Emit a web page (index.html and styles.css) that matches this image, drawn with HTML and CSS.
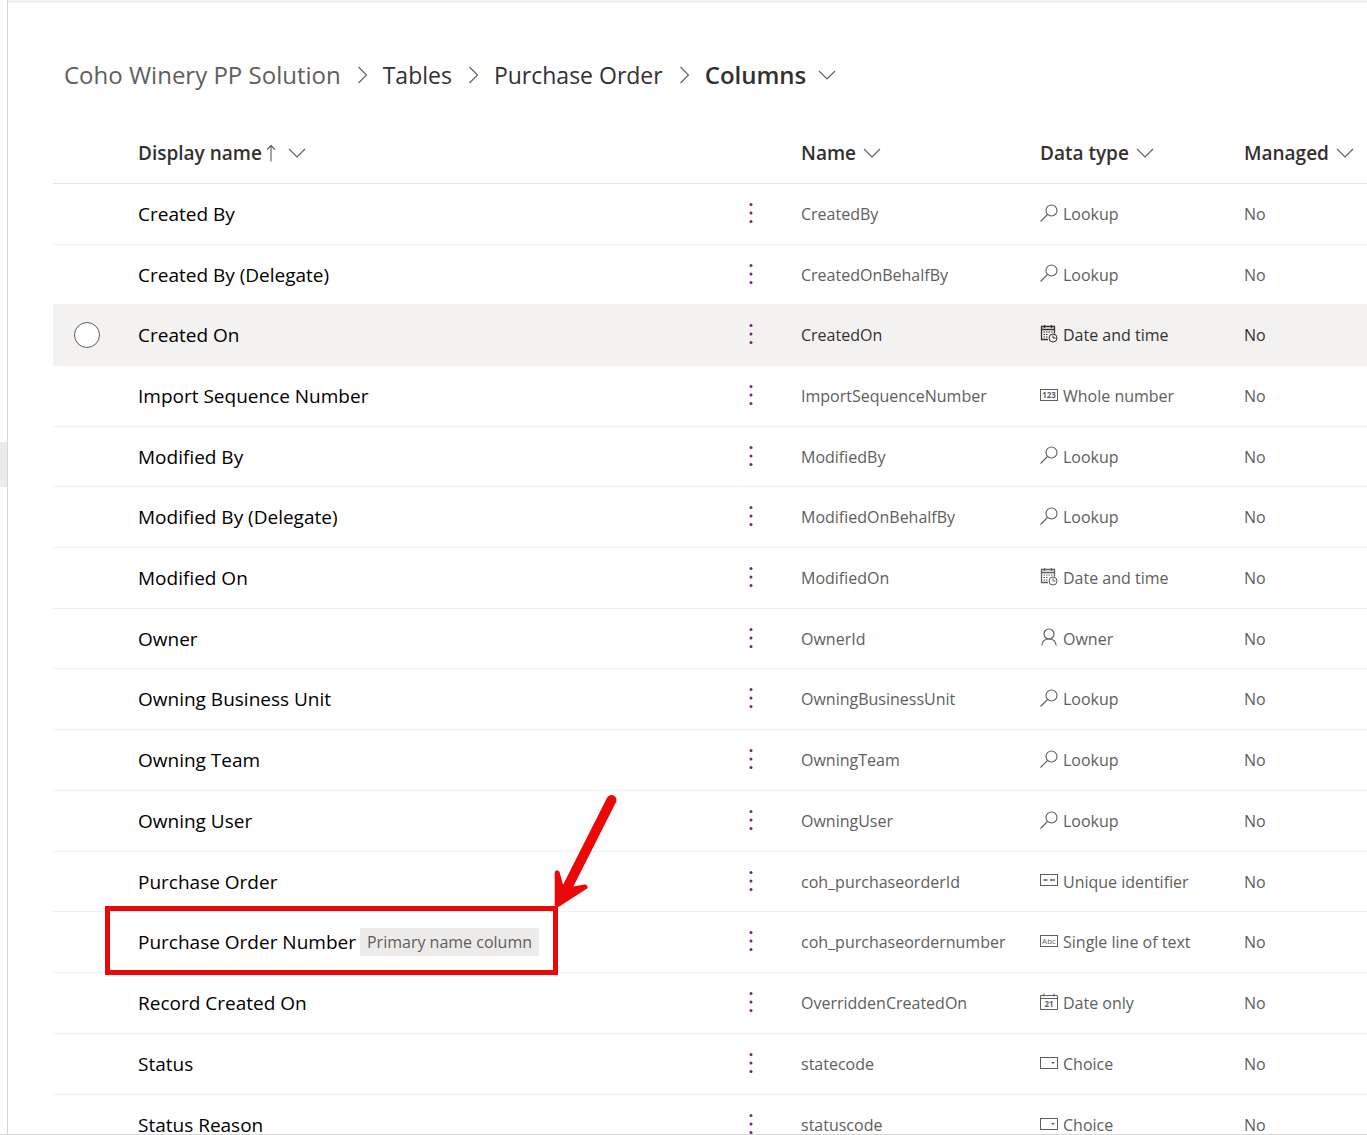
FILE: index.html
```html
<!DOCTYPE html>
<html lang="en">
<head>
<meta charset="utf-8">
<title>Columns - Purchase Order</title>
<link rel="stylesheet" href="styles.css">
</head>
<body>
<svg class="sprite" aria-hidden="true">
  <symbol id="chevron-right" viewBox="0 0 12 18"><path d="M1.5 1 9.5 9l-8 8" fill="none" stroke="currentColor" stroke-width="1.1"/></symbol>
  <symbol id="chevron-down" viewBox="0 0 18 10"><path d="M1 1l8 8 8-8" fill="none" stroke="currentColor" stroke-width="1.1"/></symbol>
  <symbol id="arrow-up" viewBox="0 0 10 18"><path d="M5 17.500V1.500M1 5.500l4-4 4 4" fill="none" stroke="currentColor" stroke-width="1.100"/></symbol>
  <symbol id="dots" viewBox="0 0 4 20"><circle cx="2" cy="1.500" r="1.500"/><circle cx="2" cy="10" r="1.500"/><circle cx="2" cy="18.500" r="1.500"/></symbol>
  <symbol id="lookup" viewBox="0 0 18 18"><g fill="none" stroke="currentColor" stroke-width="1.100"><circle cx="11.500" cy="6.500" r="5.500"/><path d="M7.500 10.500.500 17.500"/></g></symbol>
  <symbol id="datetime" viewBox="0 0 18 18"><g fill="none" stroke="currentColor"><path d="M8 14.500H1.500v-13h13v7M1.500 4.500h13M4.500 0v3M11.500 0v3" stroke-width="1.300"/><path d="M3.500 7h9M3.500 9.500h5M3.500 12h4" stroke-width="1.200" stroke-dasharray="1.500 1"/><circle cx="13" cy="13" r="4"/><path d="M13 10.500V13h2.500"/></g></symbol>
  <symbol id="number" viewBox="0 0 18 18"><rect x=".5" y="3.500" width="17" height="11" fill="none" stroke="currentColor"/><text x="9" y="12" font-size="8" font-weight="700" text-anchor="middle" fill="currentColor">123</text></symbol>
  <symbol id="owner" viewBox="0 0 18 18"><g fill="none" stroke="currentColor" stroke-width="1.200"><circle cx="9" cy="6" r="5"/><path d="M1.800 17.500C2.200 13.500 5 11 9 11s6.800 2.500 7.200 6.500"/></g></symbol>
  <symbol id="identifier" viewBox="0 0 18 18"><g fill="none" stroke="currentColor"><rect x=".5" y="3.500" width="17" height="11"/><path d="M3.500 9h4M10 9h5" stroke-width="1.400"/></g></symbol>
  <symbol id="text" viewBox="0 0 18 18"><rect x=".5" y="3.500" width="17" height="11" fill="none" stroke="currentColor"/><text x="9" y="12" font-size="8" text-anchor="middle" fill="currentColor">Abc</text></symbol>
  <symbol id="date" viewBox="0 0 18 18"><path d="M.5 2.500h17v14H.5zM.5 5.500h17M4 .500v3M14 .500v3" fill="none" stroke="currentColor"/><text x="9" y="14" font-size="8" font-weight="700" text-anchor="middle" fill="currentColor">21</text></symbol>
  <symbol id="choice" viewBox="0 0 18 18"><rect x=".5" y="3.500" width="17" height="11" fill="none" stroke="currentColor"/><path d="M11 8h4l-2 2z" fill="currentColor"/></symbol>
</svg>
<div class="app">
  <nav class="rail" aria-label="Sections"><a class="rail-item" href="#" aria-label="Tables"></a></nav>
  <main class="content">
    <nav class="breadcrumb" aria-label="Breadcrumb">
      <a class="crumb crumb-root" href="#">Coho Winery PP Solution</a>
      <svg class="separator"><use href="#chevron-right"/></svg>
      <a class="crumb" href="#">Tables</a>
      <svg class="separator"><use href="#chevron-right"/></svg>
      <a class="crumb" href="#">Purchase Order</a>
      <svg class="separator"><use href="#chevron-right"/></svg>
      <button class="crumb crumb-current" type="button">Columns<svg class="chevron"><use href="#chevron-down"/></svg></button>
    </nav>
    <table class="grid">
      <colgroup><col class="col-select"><col><col class="col-more"><col class="col-name"><col class="col-type"><col class="col-managed"></colgroup>
      <thead>
        <tr>
          <td></td>
          <th scope="col"><button class="sort" type="button">Display name<svg class="arrow"><use href="#arrow-up"/></svg><svg class="chevron"><use href="#chevron-down"/></svg></button></th>
          <td></td>
          <th scope="col"><button class="sort" type="button">Name<svg class="chevron"><use href="#chevron-down"/></svg></button></th>
          <th scope="col"><button class="sort" type="button">Data type<svg class="chevron"><use href="#chevron-down"/></svg></button></th>
          <th scope="col"><button class="sort" type="button">Managed<svg class="chevron"><use href="#chevron-down"/></svg></button></th>
        </tr>
      </thead>
      <tbody>
        <tr><td></td><td class="display">Created By</td><td class="more"><button type="button" aria-label="More actions"><svg><use href="#dots"/></svg></button></td><td>CreatedBy</td><td><span class="type"><svg><use href="#lookup"/></svg>Lookup</span></td><td>No</td></tr>
        <tr class="short"><td></td><td class="display">Created By (Delegate)</td><td class="more"><button type="button" aria-label="More actions"><svg><use href="#dots"/></svg></button></td><td>CreatedOnBehalfBy</td><td><span class="type"><svg><use href="#lookup"/></svg>Lookup</span></td><td>No</td></tr>
        <tr class="hovered"><td class="select"><input type="radio" name="row" aria-label="Select Created On"></td><td class="display">Created On</td><td class="more"><button type="button" aria-label="More actions"><svg><use href="#dots"/></svg></button></td><td>CreatedOn</td><td><span class="type"><svg><use href="#datetime"/></svg>Date and time</span></td><td>No</td></tr>
        <tr><td></td><td class="display">Import Sequence Number</td><td class="more"><button type="button" aria-label="More actions"><svg><use href="#dots"/></svg></button></td><td>ImportSequenceNumber</td><td><span class="type"><svg><use href="#number"/></svg>Whole number</span></td><td>No</td></tr>
        <tr class="short"><td></td><td class="display">Modified By</td><td class="more"><button type="button" aria-label="More actions"><svg><use href="#dots"/></svg></button></td><td>ModifiedBy</td><td><span class="type"><svg><use href="#lookup"/></svg>Lookup</span></td><td>No</td></tr>
        <tr><td></td><td class="display">Modified By (Delegate)</td><td class="more"><button type="button" aria-label="More actions"><svg><use href="#dots"/></svg></button></td><td>ModifiedOnBehalfBy</td><td><span class="type"><svg><use href="#lookup"/></svg>Lookup</span></td><td>No</td></tr>
        <tr><td></td><td class="display">Modified On</td><td class="more"><button type="button" aria-label="More actions"><svg><use href="#dots"/></svg></button></td><td>ModifiedOn</td><td><span class="type"><svg><use href="#datetime"/></svg>Date and time</span></td><td>No</td></tr>
        <tr class="short"><td></td><td class="display">Owner</td><td class="more"><button type="button" aria-label="More actions"><svg><use href="#dots"/></svg></button></td><td>OwnerId</td><td><span class="type"><svg><use href="#owner"/></svg>Owner</span></td><td>No</td></tr>
        <tr><td></td><td class="display">Owning Business Unit</td><td class="more"><button type="button" aria-label="More actions"><svg><use href="#dots"/></svg></button></td><td>OwningBusinessUnit</td><td><span class="type"><svg><use href="#lookup"/></svg>Lookup</span></td><td>No</td></tr>
        <tr><td></td><td class="display">Owning Team</td><td class="more"><button type="button" aria-label="More actions"><svg><use href="#dots"/></svg></button></td><td>OwningTeam</td><td><span class="type"><svg><use href="#lookup"/></svg>Lookup</span></td><td>No</td></tr>
        <tr><td></td><td class="display">Owning User</td><td class="more"><button type="button" aria-label="More actions"><svg><use href="#dots"/></svg></button></td><td>OwningUser</td><td><span class="type"><svg><use href="#lookup"/></svg>Lookup</span></td><td>No</td></tr>
        <tr class="short"><td></td><td class="display">Purchase Order</td><td class="more"><button type="button" aria-label="More actions"><svg><use href="#dots"/></svg></button></td><td>coh_purchaseorderId</td><td><span class="type"><svg><use href="#identifier"/></svg>Unique identifier</span></td><td>No</td></tr>
        <tr><td></td><td class="display"><span class="primary">Purchase Order Number<span class="badge">Primary name column</span></span><span class="callout"></span><svg class="pointer" viewBox="0 0 70 120" aria-hidden="true"><path class="shaft" d="M61.500 10 17 98"/><path class="head" d="M7.200 83v31.800L35 97 18 100 11 97z"/></svg></td><td class="more"><button type="button" aria-label="More actions"><svg><use href="#dots"/></svg></button></td><td>coh_purchaseordernumber</td><td><span class="type"><svg><use href="#text"/></svg>Single line of text</span></td><td>No</td></tr>
        <tr><td></td><td class="display">Record Created On</td><td class="more"><button type="button" aria-label="More actions"><svg><use href="#dots"/></svg></button></td><td>OverriddenCreatedOn</td><td><span class="type"><svg><use href="#date"/></svg>Date only</span></td><td>No</td></tr>
        <tr><td></td><td class="display">Status</td><td class="more"><button type="button" aria-label="More actions"><svg><use href="#dots"/></svg></button></td><td>statecode</td><td><span class="type"><svg><use href="#choice"/></svg>Choice</span></td><td>No</td></tr>
        <tr><td></td><td class="display">Status Reason</td><td class="more"><button type="button" aria-label="More actions"><svg><use href="#dots"/></svg></button></td><td>statuscode</td><td><span class="type"><svg><use href="#choice"/></svg>Choice</span></td><td>No</td></tr>
      </tbody>
    </table>
  </main>
</div>
</body>
</html>
```
FILE: styles.css
```css
* { box-sizing: border-box; }
body {
  margin: 0;
  font-family: "Open Sans", "Noto Sans", sans-serif;
  font-size: 16px;
  line-height: 24px;
  color: #605e5c;
  background: #fff;
}
button { padding: 0; border: 0; background: none; font: inherit; color: inherit; }
a { color: inherit; text-decoration: none; }
.sprite { display: none; }

.app {
  display: flex;
  height: 100vh;
  overflow: hidden;
  border-bottom: 1px solid #d6d6d6;
}
.rail {
  flex: none;
  width: 8px;
  padding-top: 442px;
  border-right: 1px solid #d6d6d6;
}
.rail-item { display: block; height: 45px; background: #edebe9; }
.content {
  flex: 1;
  min-width: 0;
  padding-left: 45px;
  border-top: 3px solid #f3f2f1;
}

.breadcrumb {
  display: flex;
  align-items: center;
  height: 120px;
  padding: 24px 0 0 11px;
  font-size: 23px;
  line-height: 32px;
  color: #323130;
  white-space: nowrap;
}
.crumb-root { font-size: 24px; color: #605e5c; }
.crumb-current { display: flex; align-items: center; gap: 12px; font-size: 24px; font-weight: 600; }
.separator { flex: none; width: 12px; height: 18px; margin: 0 14px 0 16px; color: #605e5c; }
.chevron { flex: none; width: 18px; height: 10px; color: #605e5c; }

.grid { width: 100%; table-layout: fixed; border-collapse: separate; border-spacing: 0; }
.col-select { width: 85px; }
.col-more { width: 100px; }
.col-name { width: 239px; }
.col-type { width: 204px; }
.col-managed { width: 123px; }
.grid th, .grid td {
  height: 61px;
  padding: 0;
  border-bottom: 1px solid #f1f0ef;
  text-align: left;
  vertical-align: middle;
  white-space: nowrap;
}
.grid thead th, .grid thead td { border-bottom-color: #e6e6e6; }
.grid .short td { height: 60px; }
.sort { display: flex; align-items: center; gap: 7px; font-size: 19px; font-weight: 600; color: #323130; }
.arrow { width: 10px; height: 18px; margin: 0 5px 0 -3px; color: #605e5c; }

.grid .display { position: relative; font-size: 19px; color: #000; }
.more button { display: block; width: 32px; height: 32px; margin: 0 auto; padding-bottom: 2px; }
.more svg { display: block; width: 4px; height: 20px; margin: 0 auto; fill: #742774; }
.select input {
  display: block;
  width: 26px;
  height: 26px;
  margin: 0 21px;
  appearance: none;
  border: 1px solid #605e5c;
  border-radius: 50%;
  background: #fff;
}
.hovered { color: #323130; }
.grid .hovered td { background: #f3f2f1; border-color: #f3f2f1; }
.type { display: flex; align-items: center; gap: 5px; }
.type svg { flex: none; width: 18px; height: 18px; margin-bottom: 3px; }

.primary { display: flex; align-items: center; gap: 4px; }
.badge {
  padding: 2px 7px;
  border-radius: 2px;
  background: #edebe9;
  font-size: 16px;
  color: #605e5c;
}
.callout {
  position: absolute;
  top: -6px;
  left: -33px;
  width: 453px;
  height: 69px;
  border: 5px solid #eb0808;
}
.pointer { position: absolute; top: -122px; left: 412px; width: 70px; height: 120px; overflow: visible; }
.shaft { fill: none; stroke: #eb0808; stroke-width: 10; stroke-linecap: round; }
.head { fill: #eb0808; stroke: #eb0808; stroke-width: 5; stroke-linejoin: round; }
```
